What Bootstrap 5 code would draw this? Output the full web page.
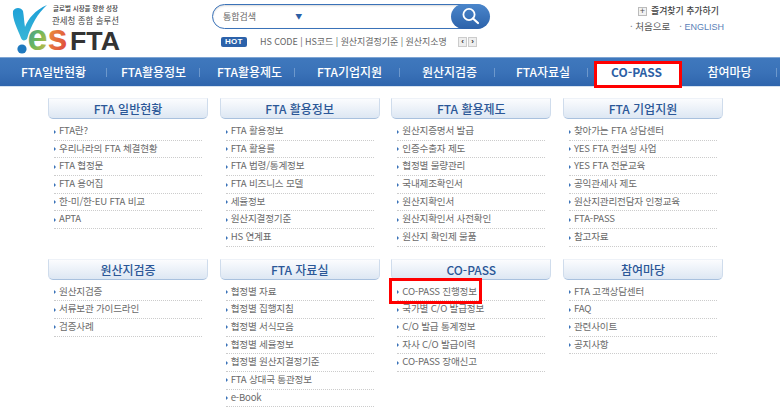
<!DOCTYPE html>
<html lang="ko">
<head>
<meta charset="utf-8">
<title>YES FTA</title>
<link href="https://cdn.jsdelivr.net/npm/bootstrap@5.3.0/dist/css/bootstrap.min.css" rel="stylesheet">
<style>
html,body{width:780px;height:417px;overflow:hidden;background:#fff}
body{font-family:"Noto Sans CJK KR","Liberation Sans",sans-serif;font-size:10px;color:#555;position:relative}
a{text-decoration:none;color:inherit}
.top-head{height:57px}
.logo-area{width:200px;flex:none}
.search-area{width:290px;flex:none;margin-left:12px;padding-top:4px}
.search-box{height:25px;width:277px;border:1.5px solid #3a72b8;border-radius:13px;position:relative;background:#fff;color:#666;font-size:9px;padding-left:10px;box-shadow:inset 0 1px 2px #d8d8d8}
.search-go{position:absolute;right:-1.5px;top:-1.5px;width:39px;height:25px;border-radius:13px;background:linear-gradient(#4a86cb,#2c62aa);display:flex;align-items:center;justify-content:center}
.sel-arrow{color:#2c5fa5;font-size:7px;margin-left:39px}
.hot-row{margin-top:6px;margin-left:9px;font-size:9px;color:#666;white-space:nowrap}
.hot-tag{background:#2c62aa;color:#fff;font:bold 8px "Liberation Sans",sans-serif;padding:0 4px;height:10px;line-height:10px;border-radius:2px;width:26px;margin-right:13px;flex:none;letter-spacing:.2px}
.hot-words{width:188px;letter-spacing:-.05px}
.arrow-btn{width:9px;height:10px;background:#eee;border:1px solid #ccc;font:bold 8px/7px "Liberation Sans",sans-serif;text-align:center;color:#333;margin-left:1px;flex:none}
.arrow-first{margin-left:10px}
.util-area{margin-left:auto;width:160px;padding-top:5px;font-size:9.5px;color:#555}
.plus-box{width:9px;height:9px;border:1px solid #bbb;background:#f2f2f2;font:9px/7px "Liberation Sans",sans-serif;text-align:center;color:#555;margin-right:4px}
.util-fav{color:#444;font-weight:500;margin-left:18px;line-height:12px;font-size:8.9px;white-space:nowrap}
.util-links{margin-left:10px;margin-top:3px;line-height:12px}
.util-eng{color:#5a7fb8;font-family:"Liberation Sans",sans-serif;font-size:9px}
.util-dot{margin-left:9px}
.main-bar{height:29px;background:linear-gradient(#3f78bd 0,#3a72b8 50%,#2f65ad 100%);border-top:1px solid #7ea5d4;box-shadow:0 1px 0 #d6e2f0}
.bar-item{display:flex;align-items:center;justify-content:center;color:#fff;font-weight:500;font-size:12px;height:28px;position:relative}
.bar-item::after{content:"";position:absolute;right:0;top:10px;height:9px;width:1px;background:#6d98cc}
.bar-item:nth-child(1){width:107px}.bar-item:nth-child(2){width:93px}.bar-item:nth-child(3){width:95px;padding-left:4px}.bar-item:nth-child(4){width:105px;padding-left:4px}
.bar-item:nth-child(5){width:95px;padding-left:4px}.bar-item:nth-child(6){width:93px;padding-left:3px}.bar-item:nth-child(7){width:94px;padding-left:3px}.bar-item:nth-child(8){width:95px}
.bar-on{color:#2c5fa5;font-weight:700}
.bar-on::before{content:"";position:absolute;left:6px;right:0;top:3px;bottom:-2px;background:#fff;border:3px solid #f00}
.bar-on span{position:relative}
.bar-on::after{display:none}
.menu-wrap{padding:12px 0 0 48px;display:grid;grid-template-columns:repeat(4,160px);column-gap:11.67px;row-gap:0}
.menu-group{height:160.5px}
.menu-title{height:21px;background:linear-gradient(#fbfcfe,#dde7f3);border:1px solid #cfdcec;border-top-color:#eef2f8;border-bottom:1px solid #a9c1de;border-radius:0 0 5px 5px;text-align:center;color:#2b5797;font-weight:500;font-size:12px;line-height:19px}
.menu-list{list-style:none;margin:4px 6px 0;padding:0}
.menu-list li{height:17.7px;line-height:15.7px;border-bottom:1px dotted #ccc;padding-left:5px;position:relative;font-size:9.6px;letter-spacing:-.2px;color:#6a6a6a;white-space:nowrap}
.menu-list li::before{content:"";position:absolute;left:0;top:6.5px;border-left:2.5px solid #3a72b8;border-top:2px solid transparent;border-bottom:2px solid transparent}
.red-mark{position:absolute;left:389px;top:278px;width:93px;height:26px;border:3px solid #f00;pointer-events:none}
</style>
</head>
<body>
<div class="top-head d-flex">
  <div class="logo-area">
    <svg width="200" height="57" viewBox="0 0 200 57" xmlns="http://www.w3.org/2000/svg">
      <defs>
        <linearGradient id="gy" x1="0" y1="0" x2="0" y2="1"><stop offset="0" stop-color="#1d9fd8"/><stop offset="1" stop-color="#37b6d6"/></linearGradient>
        <linearGradient id="ge" x1="0" y1="0" x2="1" y2="1"><stop offset="0" stop-color="#2f8fc0"/><stop offset=".5" stop-color="#6cb85a"/><stop offset="1" stop-color="#e5b93a"/></linearGradient>
        <linearGradient id="gs" x1="0" y1="0" x2="1" y2="1"><stop offset="0" stop-color="#eda23a"/><stop offset="1" stop-color="#dc3b3f"/></linearGradient>
      </defs>
      <path d="M13 11C15 7 21 7 23 11C24 16 24 22 25 27C28 19 35 10 47 5C38 13 31 25 27 39C25 41 22 41 21 38C18 30 12 19 13 11Z" fill="url(#gy)"/>
      <circle cx="22" cy="49" r="4.6" fill="#1f79bf"/>
      <text x="27.5" y="50" font-family="Liberation Sans,sans-serif" font-weight="700" font-size="36" fill="url(#ge)">e</text>
      <text x="47.5" y="50" font-family="Liberation Sans,sans-serif" font-weight="700" font-size="36" fill="url(#gs)">s</text>
      <text x="70" y="50" font-family="Liberation Sans,sans-serif" font-weight="700" font-size="26" fill="#333" textLength="50" lengthAdjust="spacingAndGlyphs">FTA</text>
      <text x="53" y="11" font-family="Noto Sans CJK KR,sans-serif" font-weight="500" font-size="7" fill="#333" textLength="65" lengthAdjust="spacingAndGlyphs">글로벌 시장을 향한 성장</text>
      <text x="52" y="24" font-family="Noto Sans CJK KR,sans-serif" font-size="9" fill="#444" textLength="67" lengthAdjust="spacingAndGlyphs">관세청 종합 솔루션</text>
    </svg>
  </div>
  <div class="search-area">
    <div class="search-box d-flex align-items-center">
      <span>통합검색</span><span class="sel-arrow">▼</span>
      <a class="search-go" href="#" aria-label="검색">
        <svg width="20" height="20" viewBox="0 0 20 20"><circle cx="9" cy="8.5" r="5.6" fill="none" stroke="#fff" stroke-width="1.8"/><path d="M13 12.5L18 17" stroke="#fff" stroke-width="2.2" stroke-linecap="round"/></svg>
      </a>
    </div>
    <div class="hot-row d-flex align-items-center">
      <span class="hot-tag">HOT</span>
      <span class="hot-words">HS CODE | HS코드 | 원산지결정기준 | 원산지소명</span>
      <span class="arrow-btn arrow-first">‹</span><span class="arrow-btn">›</span>
    </div>
  </div>
  <div class="util-area">
    <div class="util-fav d-flex align-items-center"><span class="plus-box">+</span>즐겨찾기 추가하기</div>
    <div class="util-links"><span class="text-secondary">·</span> 처음으로<span class="text-secondary util-dot">·</span> <span class="util-eng">ENGLISH</span></div>
  </div>
</div>
<nav class="main-bar d-flex">
  <a class="bar-item" href="#"><span>FTA일반현황</span></a>
  <a class="bar-item" href="#"><span>FTA활용정보</span></a>
  <a class="bar-item" href="#"><span>FTA활용제도</span></a>
  <a class="bar-item" href="#"><span>FTA기업지원</span></a>
  <a class="bar-item" href="#"><span>원산지검증</span></a>
  <a class="bar-item" href="#"><span>FTA자료실</span></a>
  <a class="bar-item bar-on" href="#"><span>CO-PASS</span></a>
  <a class="bar-item" href="#"><span>참여마당</span></a>
</nav>
<div class="menu-wrap">
  <section class="menu-group"><div class="menu-title">FTA 일반현황</div><ul class="menu-list"><li>FTA란?</li><li>우리나라의 FTA 체결현황</li><li>FTA 협정문</li><li>FTA 용어집</li><li>한-미/한-EU FTA 비교</li><li>APTA</li></ul></section>
  <section class="menu-group"><div class="menu-title">FTA 활용정보</div><ul class="menu-list"><li>FTA 활용정보</li><li>FTA 활용률</li><li>FTA 법령/통계정보</li><li>FTA 비즈니스 모델</li><li>세율정보</li><li>원산지결정기준</li><li>HS 연계표</li></ul></section>
  <section class="menu-group"><div class="menu-title">FTA 활용제도</div><ul class="menu-list"><li>원산지증명서 발급</li><li>인증수출자 제도</li><li>협정별 물량관리</li><li>국내제조확인서</li><li>원산지확인서</li><li>원산지확인서 사전확인</li><li>원산지 확인제 물품</li></ul></section>
  <section class="menu-group"><div class="menu-title">FTA 기업지원</div><ul class="menu-list"><li>찾아가는 FTA 상담센터</li><li>YES FTA 컨설팅 사업</li><li>YES FTA 전문교육</li><li>공익관세사 제도</li><li>원산지관리전담자 인정교육</li><li>FTA-PASS</li><li>참고자료</li></ul></section>
  <section class="menu-group"><div class="menu-title">원산지검증</div><ul class="menu-list"><li>원산지검증</li><li>서류보관 가이드라인</li><li>검증사례</li></ul></section>
  <section class="menu-group"><div class="menu-title">FTA 자료실</div><ul class="menu-list"><li>협정별 자료</li><li>협정별 집행지침</li><li>협정별 서식모음</li><li>협정별 세율정보</li><li>협정별 원산지결정기준</li><li>FTA 상대국 통관정보</li><li>e-Book</li></ul></section>
  <section class="menu-group"><div class="menu-title">CO-PASS</div><ul class="menu-list"><li>CO-PASS 진행정보</li><li>국가별 C/O 발급정보</li><li>C/O 발급 통계정보</li><li>자사 C/O 발급이력</li><li>CO-PASS 장애신고</li></ul></section>
  <section class="menu-group"><div class="menu-title">참여마당</div><ul class="menu-list"><li>FTA 고객상담센터</li><li>FAQ</li><li>관련사이트</li><li>공지사항</li></ul></section>
</div>
<div class="red-mark"></div>
<script src="https://cdn.jsdelivr.net/npm/bootstrap@5.3.0/dist/js/bootstrap.bundle.min.js"></script>
</body>
</html>
